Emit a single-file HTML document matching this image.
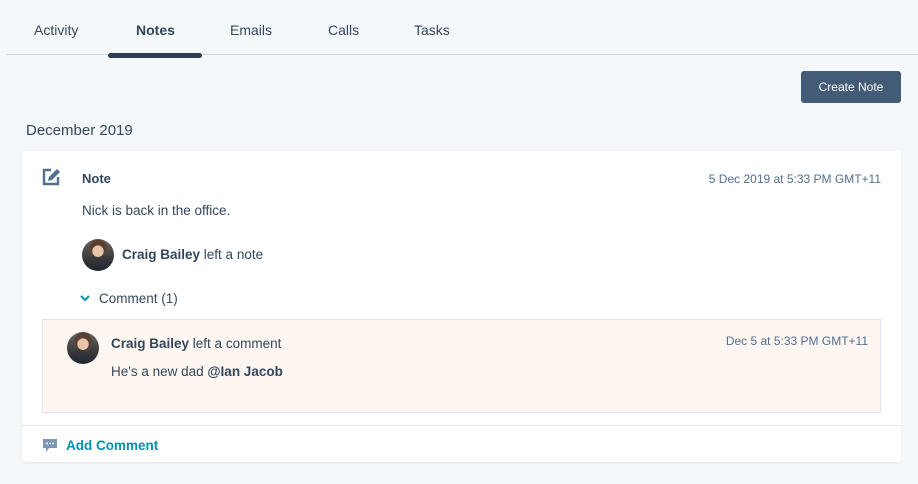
<!DOCTYPE html>
<html><head><style>
*{box-sizing:border-box;margin:0;padding:0}
body{width:918px;height:484px;background:#f5f8fa;font-family:"Liberation Sans",sans-serif;color:#33475b;position:relative;overflow:hidden}
.a{position:absolute;white-space:nowrap}
.tab{top:22px;font-size:14px;color:#33475b}
.av{position:absolute;border-radius:50%;background:radial-gradient(circle at 50% 38%,#e8c4a8 0 22%,transparent 23%),radial-gradient(circle at 50% 28%,#5a4030 0 30%,transparent 31%),linear-gradient(180deg,#6a6560 0,#3b3a3c 60%,#1e2530 100%);overflow:hidden}
</style></head><body>
<div class="a tab" style="left:34px">Activity</div>
<div class="a tab" style="left:136px;font-weight:bold">Notes</div>
<div class="a tab" style="left:230px">Emails</div>
<div class="a tab" style="left:328px">Calls</div>
<div class="a tab" style="left:414px">Tasks</div>
<div class="a" style="left:6px;top:54px;width:912px;height:1px;background:#cbd6e2"></div>
<div class="a" style="left:108px;top:53px;width:94px;height:5px;border-radius:3px;background:#2d3e50"></div>
<div class="a" style="left:801px;top:71px;width:100px;height:32px;background:#425b76;border-radius:3px;color:#fff;font-size:12px;text-align:center;line-height:32px">Create Note</div>
<div class="a" style="left:26px;top:122px;font-size:15px">December 2019</div>
<div class="a" style="left:22px;top:151px;width:879px;height:311px;background:#fff;border-radius:3px;box-shadow:0 1px 2px rgba(0,0,0,.08)"></div>
<svg class="a" style="left:42px;top:168px" width="20" height="18" viewBox="0 0 20 18"><path d="M9 2H2v14h14V9" fill="none" stroke="#516f90" stroke-width="2.4"/><path d="M15 1l3 3-8 8-4 1 1-4z" fill="#516f90"/></svg>
<div class="a" style="left:82px;top:171px;font-size:13px;font-weight:bold">Note</div>
<div class="a" style="right:37px;top:172px;font-size:12px;color:#516f90">5 Dec 2019 at 5:33 PM GMT+11</div>
<div class="a" style="left:82px;top:203px;font-size:13.5px">Nick is back in the office.</div>
<div class="av" style="left:82px;top:239px;width:32px;height:32px"></div>
<div class="a" style="left:122px;top:247px;font-size:13.5px"><b>Craig Bailey</b> left a note</div>
<svg class="a" style="left:80px;top:294px" width="10" height="8"><path d="M1 2l4 4 4-4" fill="none" stroke="#0091ae" stroke-width="2"/></svg>
<div class="a" style="left:99px;top:291px;font-size:13.5px">Comment (1)</div>
<div class="a" style="left:42px;top:319px;width:839px;height:94px;background:#fef6f1;border:1px solid #dfe3eb"></div>
<div class="av" style="left:67px;top:332px;width:32px;height:32px"></div>
<div class="a" style="left:111px;top:336px;font-size:13.5px"><b>Craig Bailey</b> left a comment</div>
<div class="a" style="right:50px;top:334px;font-size:12px;color:#516f90">Dec 5 at 5:33 PM GMT+11</div>
<div class="a" style="left:111px;top:364px;font-size:13.5px">He's a new dad <b>@Ian Jacob</b></div>
<div class="a" style="left:22px;top:425px;width:879px;height:1px;background:#dfe3eb"></div>
<svg class="a" style="left:42px;top:438px" width="16" height="15"><path d="M1 1h14v9H7l-3 4v-4H1z" fill="#7c98b6"/><circle cx="5" cy="5.5" r="1" fill="#fff"/><circle cx="8" cy="5.5" r="1" fill="#fff"/><circle cx="11" cy="5.5" r="1" fill="#fff"/></svg>
<div class="a" style="left:66px;top:438px;font-size:13.5px;font-weight:bold;color:#0091ae">Add Comment</div>
</body></html>
